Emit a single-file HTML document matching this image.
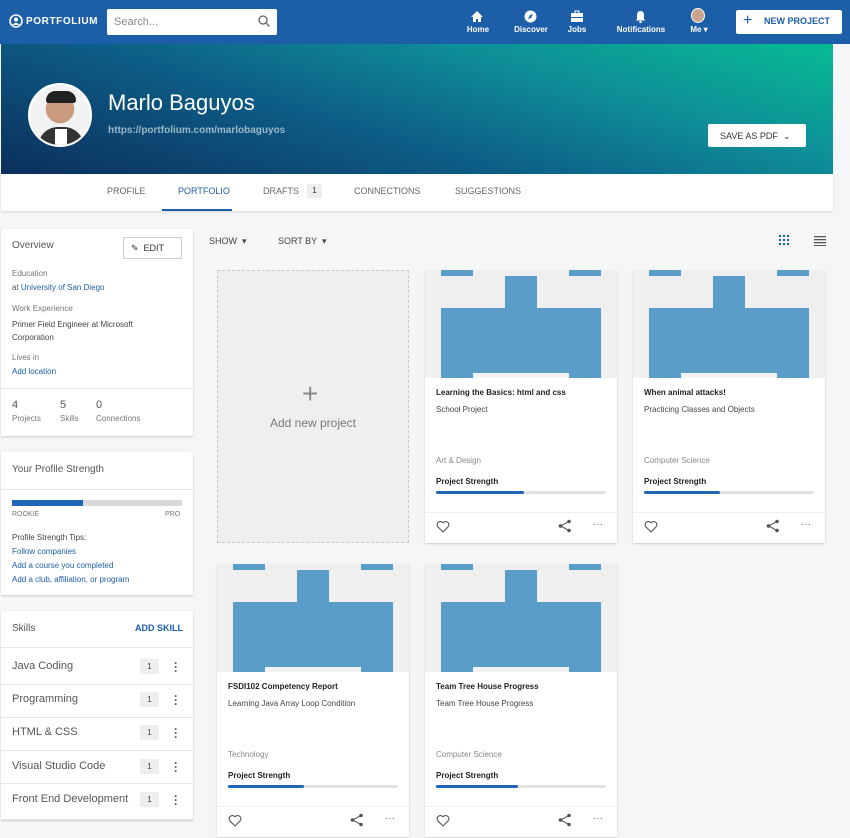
<!DOCTYPE html>
<html><head><meta charset="utf-8"><style>
*{box-sizing:border-box;margin:0;padding:0}
body{width:850px;height:838px;overflow:hidden;background:#f5f6f8;font-family:"Liberation Sans",sans-serif;position:relative;color:#333}
.a{position:absolute}
.nav{left:0;top:0;width:850px;height:44px;background:#1d5ea8}
.ni{color:#fff;font-size:8px;font-weight:bold;text-align:center}
.card{background:#fff;box-shadow:0 1px 2px rgba(0,0,0,.18)}
.lk{color:#1d5ea8}
.pc{position:absolute;width:192px;height:273px;background:#fff;box-shadow:0 1px 2px rgba(0,0,0,.18)}
.pc .img{position:absolute;left:0;top:0;width:192px;height:108px;background:#efefef;overflow:hidden}
.pc .img div{position:absolute;background:#5a9dc8}
.pc .t{position:absolute;left:11px;top:118px;font-size:8px;font-weight:bold;color:#222}
.pc .s{position:absolute;left:11px;top:135px;font-size:8px;color:#444}
.pc .c{position:absolute;left:11px;top:186px;font-size:8px;color:#888}
.pc .ps{position:absolute;left:11px;top:207px;font-size:8px;font-weight:bold;color:#222}
.pc .bar{position:absolute;left:11px;top:221px;width:170px;height:3px;background:#e2e2e2;border-radius:2px}
.pc .bar div{height:3px;background:#1f66b8;border-radius:2px}
.pc .ft{position:absolute;left:0;top:242px;width:192px;border-top:1px solid #eee}
.sk{position:absolute;left:12px;font-size:11px;color:#555}
.sr{position:absolute;left:1px;width:192px;border-top:1px solid #e6e6e6}
.bd{position:absolute;left:140px;width:19px;height:15px;background:#eee;font-size:8px;text-align:center;line-height:15px;color:#444}
.dt{position:absolute;left:174px;font-size:12px;color:#555;font-weight:bold;line-height:4px;width:4px}
</style></head><body>
<div class="a nav"></div>
<svg class="a" style="left:9px;top:14px" width="14" height="14" viewBox="0 0 14 14"><circle cx="7" cy="7" r="6" fill="none" stroke="#fff" stroke-width="1.6"/><circle cx="7" cy="5.5" r="2" fill="#fff"/><path d="M3.5 11 Q7 6.5 10.5 11" fill="#fff"/></svg>
<div class="a" style="left:26px;top:16px;color:#fff;font-size:10px;font-weight:bold;letter-spacing:0.6px">PORTFOLIUM</div>
<div class="a" style="left:107px;top:9px;width:170px;height:26px;background:#fff;border-radius:2px"></div>
<div class="a" style="left:114px;top:16px;font-size:11px;color:#888">Search...</div>
<svg class="a" style="left:258px;top:15px" width="12" height="12"><circle cx="5" cy="5" r="4" fill="none" stroke="#666" stroke-width="1.3"/><path d="M8 8l3.5 3.5" stroke="#666" stroke-width="1.3"/></svg>
<svg class="a" style="left:470px;top:10px" width="14" height="13"><path d="M7 1L1 7h2v5h3V9h2v3h3V7h2z" fill="#fff"/></svg>
<div class="a ni" style="left:460px;top:25px;width:36px">Home</div>
<svg class="a" style="left:524px;top:10px" width="13" height="13"><circle cx="6.5" cy="6.5" r="6" fill="#fff"/><path d="M4 9l2-4 3-1-2 4z" fill="#1d5ea8"/></svg>
<div class="a ni" style="left:510px;top:25px;width:42px">Discover</div>
<svg class="a" style="left:570px;top:10px" width="14" height="13"><rect x="1" y="3" width="12" height="9" fill="#fff"/><rect x="5" y="1" width="4" height="3" fill="none" stroke="#fff"/><rect x="1" y="7" width="12" height="1" fill="#1d5ea8"/></svg>
<div class="a ni" style="left:562px;top:25px;width:30px">Jobs</div>
<svg class="a" style="left:634px;top:10px" width="13" height="13"><path d="M6.5 1C4 1 3 3 3 5v4L1.5 10.5h10L10 9V5c0-2-1-4-3.5-4z" fill="#fff"/><circle cx="6.5" cy="12" r="1.2" fill="#fff"/></svg>
<div class="a ni" style="left:615px;top:25px;width:52px">Notifications</div>
<div class="a" style="left:691px;top:8px;width:14px;height:15px;border-radius:50%;background:#c9a58e;border:1px solid #fff"></div>
<div class="a ni" style="left:685px;top:25px;width:28px">Me ▾</div>
<div class="a" style="left:736px;top:10px;width:106px;height:24px;background:#fff;border-radius:2px"></div>
<div class="a" style="left:743px;top:12px;font-size:16px;color:#1d5ea8">+</div>
<div class="a" style="left:764px;top:16px;font-size:9px;font-weight:bold;color:#1d5ea8">NEW PROJECT</div>
<div class="a" style="left:1px;top:44px;width:832px;height:130px;background:linear-gradient(17deg,#0b2f5c 0%,#0d5d86 40%,#0e8f98 70%,#07bb93 100%)"></div>
<div class="a" style="left:28px;top:83px;width:64px;height:64px;border-radius:50%;background:radial-gradient(circle at 50% 40%,#c99a7c 0 30%,#f2f2f2 31%);border:2px solid #fff;overflow:hidden"><div class="a" style="left:8px;top:42px;width:46px;height:22px;background:#333;border-radius:20px 20px 0 0"></div><div class="a" style="left:25px;top:44px;width:12px;height:20px;background:#fff"></div><div class="a" style="left:16px;top:6px;width:30px;height:12px;background:#222;border-radius:14px 14px 4px 4px"></div></div>
<div class="a" style="left:108px;top:90px;font-size:22px;color:#fff">Marlo Baguyos</div>
<div class="a" style="left:108px;top:125px;font-size:10px;font-weight:bold;color:#9bb8c9">https://portfolium.com/marlobaguyos</div>
<div class="a" style="left:708px;top:124px;width:98px;height:23px;background:#fff;border-radius:2px;font-size:9px;color:#333;padding:7px 0 0 12px">SAVE AS PDF &nbsp;⌄</div>
<div class="a" style="left:1px;top:174px;width:832px;height:37px;background:#fff;box-shadow:0 1px 2px rgba(0,0,0,.12)"></div>
<div class="a" style="left:107px;top:186px;font-size:9px;color:#666">PROFILE</div>
<div class="a" style="left:178px;top:186px;font-size:9px;color:#1d5ea8">PORTFOLIO</div>
<div class="a" style="left:162px;top:209px;width:70px;height:2px;background:#1d5ea8"></div>
<div class="a" style="left:263px;top:186px;font-size:9px;color:#666">DRAFTS</div>
<div class="a" style="left:307px;top:184px;width:15px;height:14px;background:#eee;font-size:8px;text-align:center;line-height:14px">1</div>
<div class="a" style="left:354px;top:186px;font-size:9px;color:#666">CONNECTIONS</div>
<div class="a" style="left:455px;top:186px;font-size:9px;color:#666">SUGGESTIONS</div>

<div class="a card" style="left:1px;top:229px;width:192px;height:207px"></div>
<div class="a" style="left:12px;top:240px;font-size:10px;color:#555">Overview</div>
<div class="a" style="left:123px;top:237px;width:59px;height:22px;border:1px solid #ccc;font-size:9px;color:#333;padding:5px 0 0 7px">✎ &nbsp;EDIT</div>
<div class="a" style="left:12px;top:269px;font-size:8px;color:#777">Education</div>
<div class="a" style="left:12px;top:283px;font-size:8px;color:#555">at <span class="lk">University of San Diego</span></div>
<div class="a" style="left:12px;top:304px;font-size:8px;color:#777">Work Experience</div>
<div class="a" style="left:12px;top:318px;font-size:8px;color:#444;line-height:13px">Primer Field Engineer at Microsoft<br>Corporation</div>
<div class="a" style="left:12px;top:353px;font-size:8px;color:#777">Lives in</div>
<div class="a lk" style="left:12px;top:367px;font-size:8px">Add location</div>
<div class="sr" style="top:388px"></div>
<div class="a" style="left:12px;top:399px;font-size:11px;color:#555;line-height:13px">4<br><span style="font-size:8px;color:#777">Projects</span></div>
<div class="a" style="left:60px;top:399px;font-size:11px;color:#555;line-height:13px">5<br><span style="font-size:8px;color:#777">Skills</span></div>
<div class="a" style="left:96px;top:399px;font-size:11px;color:#555;line-height:13px">0<br><span style="font-size:8px;color:#777">Connections</span></div>

<div class="a card" style="left:1px;top:452px;width:192px;height:143px"></div>
<div class="a" style="left:12px;top:464px;font-size:10px;color:#555">Your Profile Strength</div>
<div class="sr" style="top:489px"></div>
<div class="a" style="left:12px;top:500px;width:170px;height:6px;background:#d9d9d9"><div style="width:71px;height:6px;background:#1f66b8"></div></div>
<div class="a" style="left:12px;top:511px;font-size:7px;color:#777">ROOKIE</div>
<div class="a" style="left:165px;top:511px;font-size:7px;color:#777">PRO</div>
<div class="a" style="left:12px;top:531px;font-size:8px;color:#444;line-height:14px">Profile Strength Tips:<br><span class="lk">Follow companies<br>Add a course you completed<br>Add a club, affiliation, or program</span></div>

<div class="a card" style="left:1px;top:611px;width:192px;height:209px"></div>
<div class="a" style="left:12px;top:623px;font-size:10px;color:#555">Skills</div>
<div class="a" style="left:135px;top:623px;font-size:9px;font-weight:bold;color:#1d5ea8">ADD SKILL</div>
<div class="sr" style="top:647px"></div>
<div class="sk" style="top:660px">Java Coding</div><div class="bd" style="top:659px">1</div><div class="dt" style="top:661px">·<br>·<br>·</div>
<div class="sr" style="top:684px"></div>
<div class="sk" style="top:693px">Programming</div><div class="bd" style="top:692px">1</div><div class="dt" style="top:694px">·<br>·<br>·</div>
<div class="sr" style="top:717px"></div>
<div class="sk" style="top:726px">HTML &amp; CSS</div><div class="bd" style="top:725px">1</div><div class="dt" style="top:727px">·<br>·<br>·</div>
<div class="sr" style="top:750px"></div>
<div class="sk" style="top:760px">Visual Studio Code</div><div class="bd" style="top:759px">1</div><div class="dt" style="top:761px">·<br>·<br>·</div>
<div class="sr" style="top:783px"></div>
<div class="sk" style="top:793px">Front End Development</div><div class="bd" style="top:792px">1</div><div class="dt" style="top:794px">·<br>·<br>·</div>
<div class="sr" style="top:819px"></div>

<div class="a" style="left:209px;top:236px;font-size:9px;color:#444">SHOW &nbsp;▾</div>
<div class="a" style="left:278px;top:236px;font-size:9px;color:#444">SORT BY &nbsp;▾</div>
<svg class="a" style="left:779px;top:235px" width="12" height="11"><g fill="#1d5ea8"><rect x="0" y="0" width="2" height="2"/><rect x="4" y="0" width="2" height="2"/><rect x="8" y="0" width="2" height="2"/><rect x="0" y="4" width="2" height="2"/><rect x="4" y="4" width="2" height="2"/><rect x="8" y="4" width="2" height="2"/><rect x="0" y="8" width="2" height="2"/><rect x="4" y="8" width="2" height="2"/><rect x="8" y="8" width="2" height="2"/></g></svg>
<svg class="a" style="left:814px;top:236px" width="12" height="10"><g fill="#555"><rect y="0" width="12" height="1.3"/><rect y="3" width="12" height="1.3"/><rect y="6" width="12" height="1.3"/><rect y="9" width="12" height="1.3"/></g></svg>

<div class="a" style="left:217px;top:270px;width:192px;height:273px;background:#efeff0;border:1px dashed #c9c9c9"></div>
<div class="a" style="left:302px;top:380px;font-size:28px;font-weight:200;color:#888;line-height:28px">+</div>
<div class="a" style="left:217px;top:416px;width:192px;text-align:center;font-size:12px;color:#777">Add new project</div>

<div class="pc" style="left:425px;top:270px"><div class="img"><div style="left:16px;top:0;width:32px;height:6px"></div><div style="left:144px;top:0;width:32px;height:6px"></div><div style="left:80px;top:6px;width:32px;height:32px"></div><div style="left:16px;top:38px;width:160px;height:70px"></div><div style="left:48px;top:103px;width:96px;height:5px;background:#f3f3f3"></div></div><div class="t">Learning the Basics: html and css</div><div class="s">School Project</div><div class="c">Art &amp; Design</div><div class="ps">Project Strength</div><div class="bar"><div style="width:88px"></div></div><div class="ft"></div>
<svg class="a" style="left:11px;top:250px" width="14" height="13"><path d="M7 12L1.8 6.8A3 3 0 0 1 7 2.8a3 3 0 0 1 5.2 4z" fill="none" stroke="#555" stroke-width="1.1"/></svg>
<svg class="a" style="left:133px;top:249px" width="14" height="14"><circle cx="11" cy="2.5" r="1.8" fill="#555"/><circle cx="2.5" cy="7" r="1.8" fill="#555"/><circle cx="11" cy="11.5" r="1.8" fill="#555"/><path d="M11 2.5L2.5 7 11 11.5" fill="none" stroke="#555"/></svg>
<div class="a" style="left:168px;top:249px;font-size:10px;color:#555">···</div></div>

<div class="pc" style="left:633px;top:270px"><div class="img"><div style="left:16px;top:0;width:32px;height:6px"></div><div style="left:144px;top:0;width:32px;height:6px"></div><div style="left:80px;top:6px;width:32px;height:32px"></div><div style="left:16px;top:38px;width:160px;height:70px"></div><div style="left:48px;top:103px;width:96px;height:5px;background:#f3f3f3"></div></div><div class="t">When animal attacks!</div><div class="s">Practicing Classes and Objects</div><div class="c">Computer Science</div><div class="ps">Project Strength</div><div class="bar"><div style="width:76px"></div></div><div class="ft"></div>
<svg class="a" style="left:11px;top:250px" width="14" height="13"><path d="M7 12L1.8 6.8A3 3 0 0 1 7 2.8a3 3 0 0 1 5.2 4z" fill="none" stroke="#555" stroke-width="1.1"/></svg>
<svg class="a" style="left:133px;top:249px" width="14" height="14"><circle cx="11" cy="2.5" r="1.8" fill="#555"/><circle cx="2.5" cy="7" r="1.8" fill="#555"/><circle cx="11" cy="11.5" r="1.8" fill="#555"/><path d="M11 2.5L2.5 7 11 11.5" fill="none" stroke="#555"/></svg>
<div class="a" style="left:168px;top:249px;font-size:10px;color:#555">···</div></div>

<div class="pc" style="left:217px;top:564px"><div class="img"><div style="left:16px;top:0;width:32px;height:6px"></div><div style="left:144px;top:0;width:32px;height:6px"></div><div style="left:80px;top:6px;width:32px;height:32px"></div><div style="left:16px;top:38px;width:160px;height:70px"></div><div style="left:48px;top:103px;width:96px;height:5px;background:#f3f3f3"></div></div><div class="t">FSDI102 Competency Report</div><div class="s">Learning Java Array Loop Condition</div><div class="c">Technology</div><div class="ps">Project Strength</div><div class="bar"><div style="width:76px"></div></div><div class="ft"></div>
<svg class="a" style="left:11px;top:250px" width="14" height="13"><path d="M7 12L1.8 6.8A3 3 0 0 1 7 2.8a3 3 0 0 1 5.2 4z" fill="none" stroke="#555" stroke-width="1.1"/></svg>
<svg class="a" style="left:133px;top:249px" width="14" height="14"><circle cx="11" cy="2.5" r="1.8" fill="#555"/><circle cx="2.5" cy="7" r="1.8" fill="#555"/><circle cx="11" cy="11.5" r="1.8" fill="#555"/><path d="M11 2.5L2.5 7 11 11.5" fill="none" stroke="#555"/></svg>
<div class="a" style="left:168px;top:249px;font-size:10px;color:#555">···</div></div>

<div class="pc" style="left:425px;top:564px"><div class="img"><div style="left:16px;top:0;width:32px;height:6px"></div><div style="left:144px;top:0;width:32px;height:6px"></div><div style="left:80px;top:6px;width:32px;height:32px"></div><div style="left:16px;top:38px;width:160px;height:70px"></div><div style="left:48px;top:103px;width:96px;height:5px;background:#f3f3f3"></div></div><div class="t">Team Tree House Progress</div><div class="s">Team Tree House Progress</div><div class="c">Computer Science</div><div class="ps">Project Strength</div><div class="bar"><div style="width:82px"></div></div><div class="ft"></div>
<svg class="a" style="left:11px;top:250px" width="14" height="13"><path d="M7 12L1.8 6.8A3 3 0 0 1 7 2.8a3 3 0 0 1 5.2 4z" fill="none" stroke="#555" stroke-width="1.1"/></svg>
<svg class="a" style="left:133px;top:249px" width="14" height="14"><circle cx="11" cy="2.5" r="1.8" fill="#555"/><circle cx="2.5" cy="7" r="1.8" fill="#555"/><circle cx="11" cy="11.5" r="1.8" fill="#555"/><path d="M11 2.5L2.5 7 11 11.5" fill="none" stroke="#555"/></svg>
<div class="a" style="left:168px;top:249px;font-size:10px;color:#555">···</div></div>
</body></html>
